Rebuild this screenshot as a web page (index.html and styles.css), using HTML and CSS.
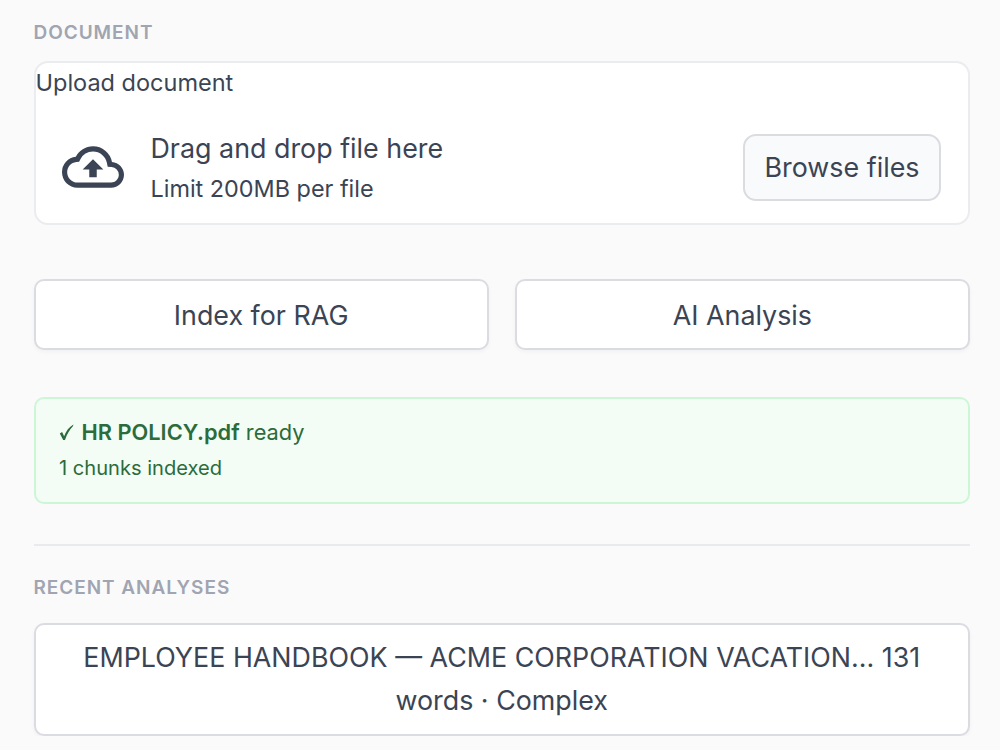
FILE: index.html
```html
<!DOCTYPE html>
<html lang="en">
<head>
  <meta charset="UTF-8">
  <meta name="viewport" content="width=device-width, initial-scale=1.0">
  <title>Document</title>
  <link rel="stylesheet" href="styles.css">
</head>
<body>
  <div class="sidebar">
    <h2 class="section-label">Document</h2>

    <div class="uploader">
      <label class="uploader-label">Upload document</label>
      <div class="dropzone">
        <svg class="cloud" viewBox="0 0 24 24" fill="currentColor">
          <path d="M19.35 10.04A7.49 7.49 0 0 0 12 4C9.11 4 6.6 5.64 5.35 8.04A5.994 5.994 0 0 0 0 14c0 3.31 2.69 6 6 6h13c2.76 0 5-2.24 5-5 0-2.64-2.05-4.78-4.65-4.96zM19 18H6c-2.21 0-4-1.79-4-4 0-2.05 1.53-3.76 3.56-3.97l1.07-.11.5-.95A5.469 5.469 0 0 1 12 6c2.62 0 4.88 1.86 5.39 4.43l.3 1.5 1.53.11A2.98 2.98 0 0 1 22 15c0 1.65-1.35 3-3 3zM8 13h2.55v3h2.9v-3H16l-4-4z"/>
        </svg>
        <div class="drop-text">
          <span class="drop-title">Drag and drop file here</span>
          <span class="drop-limit">Limit 200MB per file</span>
        </div>
        <button class="browse">Browse files</button>
      </div>
    </div>

    <div class="actions">
      <button class="btn">Index for RAG</button>
      <button class="btn">AI Analysis</button>
    </div>

    <div class="status">
      <div class="status-file"><svg class="check" viewBox="0 0 15 17" fill="currentColor"><path d="M.8 9.4 3.1 8.1l2 4.2C7.3 6.800 9.800 2.900 14.500.400L13.900 2.200C10.600 5.600 8 10 6 16H4.200Z"/></svg><strong>HR POLICY.pdf</strong> ready</div>
      <div class="status-chunks">1 chunks indexed</div>
    </div>

    <hr class="divider">

    <h2 class="section-label">Recent analyses</h2>
    <button class="btn recent">EMPLOYEE HANDBOOK — ACME CORPORATION VACATION... 131 words · Complex</button>
  </div>
</body>
</html>
```

FILE: styles.css
```css
* {
  box-sizing: border-box;
}
body {
  margin: 0;
  background-color: #fafafa;
  color: #3b4454;
  font-family: Inter, "Liberation Sans", sans-serif;
  overflow: hidden;
}
.sidebar {
  padding: 18px 30px 0 33.5px;
}
.section-label {
  margin: 0;
  color: #a0a5b1;
  font-size: 19px;
  font-weight: 600;
  line-height: 30px;
  letter-spacing: 0.95px;
  text-transform: uppercase;
}
.uploader {
  height: 164px;
  margin-top: 13px;
  background-color: #ffffff;
  border: 2px solid #ebecef;
  border-radius: 14px;
}
.uploader-label {
  display: block;
  font-size: 23.5px;
  line-height: 40px;
}
.dropzone {
  display: flex;
  align-items: center;
  margin-top: 10px;
  padding: 0 27px 0 26.5px;
  height: 108px;
}
.cloud {
  width: 62px;
  height: 62px;
  flex: none;
}
.drop-text {
  display: flex;
  flex-direction: column;
  flex: 1;
  margin-left: 26.5px;
}
.drop-title {
  font-size: 26.85px;
  line-height: 42px;
}
.drop-limit {
  font-size: 23.4px;
  line-height: 39px;
}
.browse, .btn {
  color: #3b4454;
  font-family: inherit;
  font-size: 26.85px;
  border: 2px solid #dbdce2;
  padding: 0;
  cursor: pointer;
}
.browse {
  width: 198px;
  height: 67px;
  background-color: #f9fafc;
  border-radius: 13px;
}
.actions {
  display: grid;
  grid-template-columns: 1fr 1fr;
  gap: 26px;
  margin-top: 54px;
}
.btn {
  height: 71px;
  padding-top: 1px;
  background-color: #ffffff;
  border-radius: 10px;
  box-shadow: 0 2px 4px rgba(0, 0, 0, 0.04);
}
.status {
  height: 107px;
  margin-top: 47px;
  padding: 15px 23.5px;
  color: #2c6b3a;
  background-color: #f3fdf5;
  border: 2px solid #cdf6d7;
  border-radius: 10px;
}
.status-file {
  font-size: 21.8px;
  line-height: 36px;
}
.status-file strong {
  font-weight: 600;
}
.check {
  width: 15px;
  height: 17px;
  margin-right: 7.5px;
  vertical-align: -1px;
}
.status-chunks {
  font-size: 20.1px;
  line-height: 37px;
}
.divider {
  height: 2px;
  margin: 40px 0 27px;
  border: none;
  background-color: #e9eaee;
}
.recent {
  width: 100%;
  height: 113px;
  margin-top: 20px;
  padding: 0 26px 1px;
  line-height: 43px;
}
```
